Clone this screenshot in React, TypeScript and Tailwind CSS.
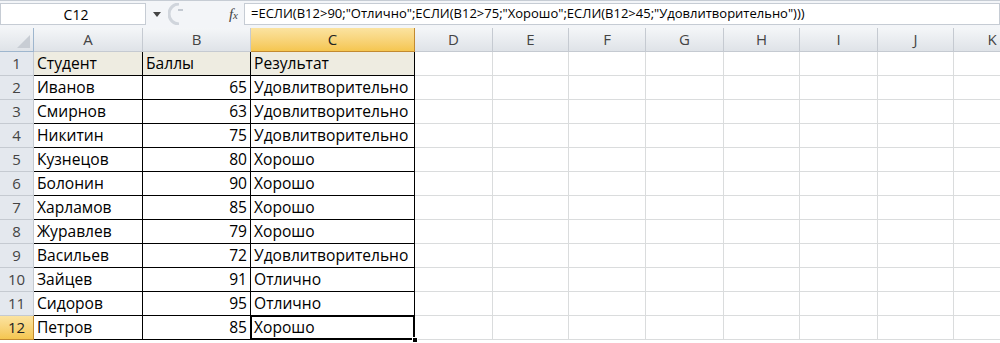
const cols = [
  { name: "A", w: 109 },
  { name: "B", w: 108 },
  { name: "C", w: 164 },
  { name: "D", w: 78 },
  { name: "E", w: 76 },
  { name: "F", w: 77 },
  { name: "G", w: 78 },
  { name: "H", w: 76 },
  { name: "I", w: 78 },
  { name: "J", w: 76 },
  { name: "K", w: 77 },
];

const data: [string, string, string][] = [
  ["Студент", "Баллы", "Результат"],
  ["Иванов", "65", "Удовлитворительно"],
  ["Смирнов", "63", "Удовлитворительно"],
  ["Никитин", "75", "Удовлитворительно"],
  ["Кузнецов", "80", "Хорошо"],
  ["Болонин", "90", "Хорошо"],
  ["Харламов", "85", "Хорошо"],
  ["Журавлев", "79", "Хорошо"],
  ["Васильев", "72", "Удовлитворительно"],
  ["Зайцев", "91", "Отлично"],
  ["Сидоров", "95", "Отлично"],
  ["Петров", "85", "Хорошо"],
];

const font = { fontFamily: '"Open Sans", "Liberation Sans", sans-serif' };

function FormulaBar() {
  return (
    <div className="flex h-[28px] items-stretch border-t border-[#c6ccd4] bg-[#f3f5f8] pt-[2px] pb-[3px]">
      <div className="flex w-[146px] items-center justify-center border border-[#c6ccd4] bg-white pl-[6px] text-[14px] text-black">
        C12
      </div>
      <div className="flex w-[22px] items-center justify-center">
        <svg width="8" height="5" viewBox="0 0 8 5">
          <path d="M0 0h8L4 5z" fill="#444" />
        </svg>
      </div>
      <div className="flex w-[40px] items-center">
        <svg width="22" height="22" viewBox="0 0 22 22">
          <path d="M11 1 A10 10 0 0 0 11 21" stroke="#d0d5dc" strokeWidth="3" fill="none" />
          <path d="M10 7 h5" stroke="#c3c9d1" strokeWidth="2" />
        </svg>
      </div>
      <div className="flex w-[36px] items-center justify-end pr-[6px]">
        <span className="text-[15px] italic text-[#444]" style={{ fontFamily: '"Liberation Serif", serif' }}>
          f<span className="text-[11px]">x</span>
        </span>
      </div>
      <div className="flex flex-1 items-center border border-[#c6ccd4] bg-white pl-[6px] text-[13px] text-black">
        =ЕСЛИ(B12&gt;90;"Отлично";ЕСЛИ(B12&gt;75;"Хорошо";ЕСЛИ(B12&gt;45;"Удовлитворительно")))
      </div>
    </div>
  );
}

function HeaderRow() {
  return (
    <div className="flex h-[24px]">
      <div className="relative w-[34px] shrink-0 border-r border-b border-[#9eb6ce] bg-gradient-to-b from-[#f3f5f7] to-[#dfe3e8]">
        <svg className="absolute right-[3px] bottom-[3px]" width="13" height="13" viewBox="0 0 13 13">
          <path d="M13 0V13H0z" fill="#c8cdd4" />
        </svg>
      </div>
      {cols.map((c) => (
        <div
          key={c.name}
          style={{ width: c.w }}
          className={
            c.name === "C"
              ? "flex shrink-0 items-center justify-center border-r border-b border-[#c28a30] bg-gradient-to-b from-[#fbe3a0] to-[#f5c64f] text-[15px] text-[#222]"
              : "flex shrink-0 items-center justify-center border-r border-b border-[#c5cad1] bg-gradient-to-b from-[#f4f6f8] to-[#dfe3e8] text-[15px] text-[#444]"
          }
        >
          {c.name}
        </div>
      ))}
    </div>
  );
}

function Row({ n, row }: { n: number; row: [string, string, string] }) {
  const sel = n === 12;
  const head = n === 1;
  return (
    <div className="flex h-[24px]">
      <div
        className={
          sel
            ? "flex w-[34px] shrink-0 items-center justify-center border-r border-b border-[#c28a30] bg-gradient-to-b from-[#fbe3a0] to-[#f5c64f] text-[15px] text-[#222]"
            : "flex w-[34px] shrink-0 items-center justify-center border-r border-b border-[#c5cad1] bg-[#e4e8ee] text-[15px] text-[#444]"
        }
      >
        {n}
      </div>
      <div
        style={{ width: cols[0].w }}
        className={`flex shrink-0 items-center border-r border-b border-black pl-[3px] text-[15.6px] text-black ${head ? "bg-[#eeece1]" : "bg-white"}`}
      >
        {row[0]}
      </div>
      <div
        style={{ width: cols[1].w }}
        className={`flex shrink-0 items-center border-r border-b border-black px-[3px] text-[15.6px] text-black ${head ? "justify-start bg-[#eeece1]" : "justify-end bg-white"}`}
      >
        {row[1]}
      </div>
      <div
        style={{ width: cols[2].w }}
        className={`relative flex shrink-0 items-center border-r border-b border-black pl-[3px] text-[15.6px] text-black ${head ? "bg-[#eeece1]" : "bg-white"}`}
      >
        {row[2]}
        {sel && (
          <>
            <div className="pointer-events-none absolute -top-[1px] -left-[1px] -right-[1px] -bottom-[1px] border-2 border-black" />
            <div className="absolute -right-[4px] -bottom-[4px] h-[6px] w-[6px] border border-white bg-black" />
          </>
        )}
      </div>
      {cols.slice(3).map((c) => (
        <div key={c.name} style={{ width: c.w }} className="shrink-0 border-r border-b border-[#dadcdd] bg-white" />
      ))}
    </div>
  );
}

export default function App() {
  return (
    <div className="h-[343px] w-[1000px] overflow-hidden bg-white" style={font}>
      <FormulaBar />
      <HeaderRow />
      {data.map((r, i) => (
        <Row key={i} n={i + 1} row={r} />
      ))}
    </div>
  );
}
